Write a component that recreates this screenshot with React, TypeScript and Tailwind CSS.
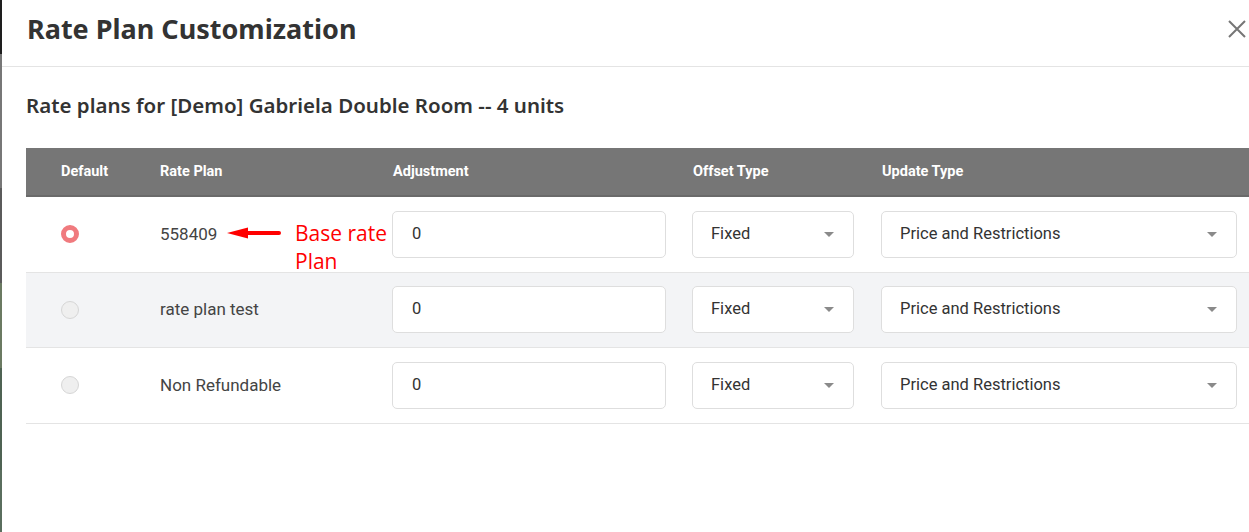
import { useState } from 'react';

interface RatePlan {
  id: string;
  name: string;
  adjustment: string;
  offset: string;
  update: string;
}

const PLANS: RatePlan[] = [
  { id: 'p1', name: '558409', adjustment: '0', offset: 'Fixed', update: 'Price and Restrictions' },
  { id: 'p2', name: 'rate plan test', adjustment: '0', offset: 'Fixed', update: 'Price and Restrictions' },
  { id: 'p3', name: 'Non Refundable', adjustment: '0', offset: 'Fixed', update: 'Price and Restrictions' },
];

const GRID = 'grid grid-cols-[99px_267px_300px_189px_1fr] items-center';

const Caret = () => (
  <svg width="10" height="5" viewBox="0 0 10 5" className="shrink-0">
    <path d="M0 0 L10 0 L5 5 Z" fill="#8a8a8a" />
  </svg>
);

const SelectBox = ({ value, width }: { value: string; width: string }) => (
  <div
    className={`${width} h-[47px] flex items-center justify-between pl-[18px] pr-[19px] bg-white border border-[#dedede] rounded-[5px] text-[16.5px] text-[#333]`}
  >
    <span>{value}</span>
    <Caret />
  </div>
);

// red annotation drawn over the first row
const Annotation = () => (
  <div className="absolute left-[102px] top-[-3px] flex items-start pointer-events-none">
    <svg width="54" height="12" viewBox="0 0 54 12" className="mt-[8px]">
      <path d="M0 6 L21 0.5 L21 11.5 Z" fill="#ff0000" />
      <line x1="19" y1="6" x2="52" y2="6" stroke="#ff0000" strokeWidth="4" strokeLinecap="round" />
    </svg>
    <div className="ml-[14px] text-[21px] leading-[28px] text-[#ff0000] font-['Open_Sans',sans-serif]">
      Base rate
      <br />
      Plan
    </div>
  </div>
);

const App = () => {
  const [selected, setSelected] = useState('p1');

  return (
    <div className="flex w-[1249px] h-[532px] overflow-hidden bg-white font-['Roboto',sans-serif]">
      {/* backdrop peeking out on the left */}
      <div className="w-[2px] flex flex-col shrink-0">
        <div className="h-[54px] bg-[#1e1e1e]" />
        <div className="h-[134px] bg-[#777777]" />
        <div className="h-[95px] bg-[#5b5b5b]" />
        <div className="h-[85px] bg-[#6b7a62]" />
        <div className="h-[102px] bg-[#4f6353]" />
        <div className="flex-1 bg-[#5a6e5e]" />
      </div>

      <div className="flex-1 flex flex-col">
        {/* header */}
        <div className="h-[67px] shrink-0 flex items-center justify-between pl-[25px] pr-[3px] border-b border-[#e4e4e4]">
          <h1 className="text-[27px] font-bold text-[#333] font-['Noto_Sans',sans-serif] -mt-[7px]">
            Rate Plan Customization
          </h1>
          <button className="w-[18px] h-[18px] -mt-[9px]" aria-label="Close">
            <svg width="18" height="18" viewBox="0 0 18 18">
              <path d="M1 1 L17 17 M17 1 L1 17" stroke="#767676" strokeWidth="2" />
            </svg>
          </button>
        </div>

        <div className="pl-[24px] pt-[24px]">
          <h2 className="text-[20.5px] font-semibold text-[#333] font-['Noto_Sans',sans-serif] leading-[28px]">
            Rate plans for [Demo] Gabriela Double Room -- 4 units
          </h2>

          <div className="mt-[29px]">
            {/* table head */}
            <div className={`${GRID} h-[49px] bg-[#767676] border-b-2 border-[#6a6a6a] text-white text-[14.5px] font-bold`}>
              <div className="pl-[35px]">Default</div>
              <div className="pl-[35px]">Rate Plan</div>
              <div className="pl-px">Adjustment</div>
              <div className="pl-px">Offset Type</div>
              <div className="pl-px">Update Type</div>
            </div>

            {PLANS.map((p, i) => (
              <div
                key={p.id}
                className={`${GRID} h-[75.5px] border-b border-[#e4e4e4] ${i % 2 === 1 ? 'bg-[#f3f4f6]' : 'bg-white'}`}
              >
                <div className="pl-[35px] flex items-center">
                  <button
                    onClick={() => setSelected(p.id)}
                    className={`w-[18px] h-[18px] rounded-full ${
                      selected === p.id
                        ? 'border-[5px] border-[#f07a7e] bg-white'
                        : 'border border-[#d6d6d6] bg-[#efefef]'
                    }`}
                    aria-label={p.name}
                  />
                </div>
                <div className="pl-[35px] relative text-[17px] text-[#444]">
                  {p.name}
                  {i === 0 && <Annotation />}
                </div>
                <div>
                  <div className="w-[274px] h-[47px] flex items-center pl-[19px] bg-white border border-[#dedede] rounded-[5px] text-[16.5px] text-[#333]">
                    {p.adjustment}
                  </div>
                </div>
                <div>
                  <SelectBox value={p.offset} width="w-[162px]" />
                </div>
                <div>
                  <SelectBox value={p.update} width="w-[356px]" />
                </div>
              </div>
            ))}
          </div>
        </div>
      </div>
    </div>
  );
};

export default App;
